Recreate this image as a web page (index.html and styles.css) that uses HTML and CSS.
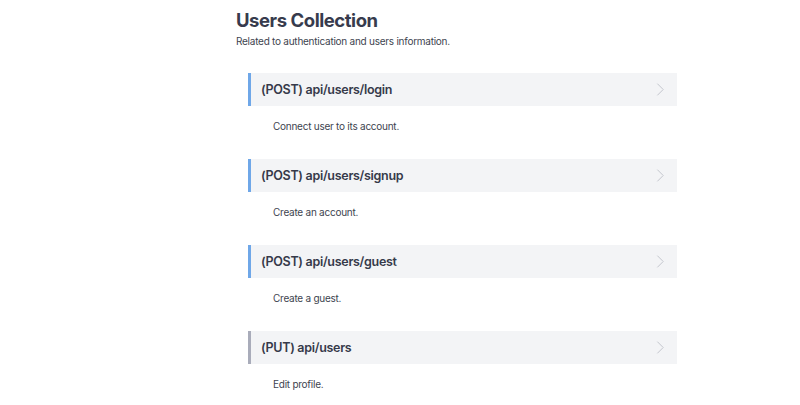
FILE: index.html
```html
<!DOCTYPE html>
<html>
<head>
<meta charset="utf-8">
<link rel="stylesheet" href="styles.css">
</head>
<body>
<main class="page">
  <h1 class="title">Users Collection</h1>
  <p class="subtitle">Related to authentication and users information.</p>
  <ul class="endpoints">
    <li class="endpoint">
      <div class="card card-post"><span class="card-title">(POST) api/users/login</span><svg class="chev" viewBox="0 0 10 16" width="9" height="15"><path d="M1.5 1.5 L8 8 L1.5 14.5" fill="none" stroke="#c2c5cc" stroke-width="1.1"/></svg></div>
      <p class="desc">Connect user to its account.</p>
    </li>
    <li class="endpoint">
      <div class="card card-post"><span class="card-title">(POST) api/users/signup</span><svg class="chev" viewBox="0 0 10 16" width="9" height="15"><path d="M1.5 1.5 L8 8 L1.5 14.5" fill="none" stroke="#c2c5cc" stroke-width="1.1"/></svg></div>
      <p class="desc">Create an account.</p>
    </li>
    <li class="endpoint">
      <div class="card card-post"><span class="card-title">(POST) api/users/guest</span><svg class="chev" viewBox="0 0 10 16" width="9" height="15"><path d="M1.5 1.5 L8 8 L1.5 14.5" fill="none" stroke="#c2c5cc" stroke-width="1.1"/></svg></div>
      <p class="desc">Create a guest.</p>
    </li>
    <li class="endpoint">
      <div class="card card-put"><span class="card-title">(PUT) api/users</span><svg class="chev" viewBox="0 0 10 16" width="9" height="15"><path d="M1.5 1.5 L8 8 L1.5 14.5" fill="none" stroke="#c2c5cc" stroke-width="1.1"/></svg></div>
      <p class="desc">Edit profile.</p>
    </li>
  </ul>
</main>
</body>
</html>
```
FILE: styles.css
```css
html, body {
  margin: 0;
  padding: 0;
  background: #ffffff;
}
body {
  font-family: Inter, "Noto Sans", sans-serif;
  color: #374151;
}
.page {
  margin-left: 236px;
  padding-top: 9px;
  width: 441px;
}
.title {
  margin: 0;
  font-size: 18.5px;
  font-weight: 700;
  line-height: 22px;
  letter-spacing: -0.45px;
  color: #373b4d;
}
.subtitle {
  margin: 3px 0 0;
  font-size: 10px;
  line-height: 14px;
  letter-spacing: -0.25px;
  color: #40444f;
}
.endpoints {
  list-style: none;
  margin: 25px 0 0 12px;
  padding: 0;
}
.endpoint {
  margin: 0 0 26px;
}
.card {
  height: 33px;
  background: #f3f4f6;
  border-left: 3px solid #6fa7e8;
  display: flex;
  align-items: center;
  justify-content: space-between;
  padding: 0 12px 0 10px;
}
.card-put {
  border-left-color: #a9acba;
}
.card-title {
  font-size: 12.5px;
  font-weight: 600;
  letter-spacing: -0.3px;
  color: #363a4a;
}
.chev {
  display: block;
}
.desc {
  margin: 13px 0 0 25px;
  font-size: 10px;
  line-height: 14px;
  letter-spacing: -0.25px;
  color: #40444f;
}
```
